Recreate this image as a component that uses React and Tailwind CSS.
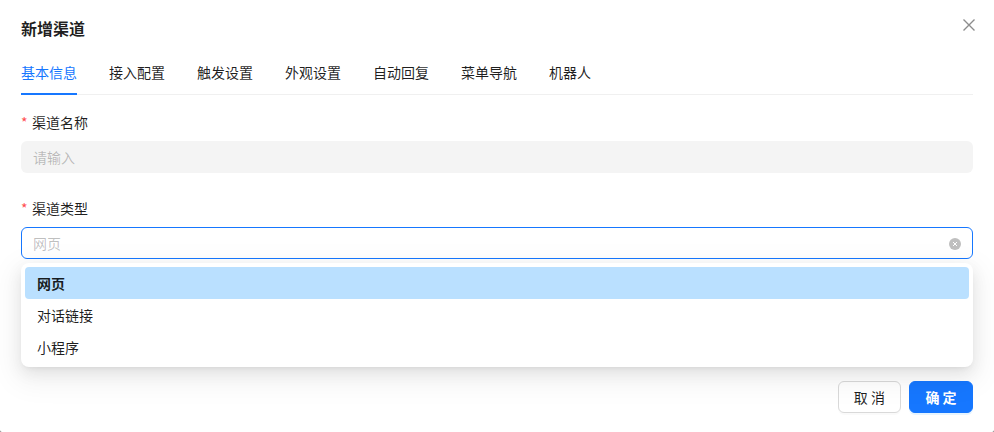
import { useState } from 'react';

const tabs = ['基本信息', '接入配置', '触发设置', '外观设置', '自动回复', '菜单导航', '机器人'];
const channelTypes = ['网页', '对话链接', '小程序'];

function FieldLabel({ htmlFor, children }) {
  return (
    <label htmlFor={htmlFor} className="flex h-[22px] items-center gap-1 self-start">
      <span className="w-[7px] text-[#ff4d4f]" aria-hidden="true">*</span>
      {children}
    </label>
  );
}

export default function App() {
  const [activeTab, setActiveTab] = useState(tabs[0]);
  const [channelType, setChannelType] = useState('网页');
  const [open, setOpen] = useState(true);

  // The custom option list replaces the native popup
  const toggleList = (e) => {
    e.preventDefault();
    e.currentTarget.focus();
    setOpen(!open);
  };

  const pick = (type) => {
    setChannelType(type);
    setOpen(false);
  };

  return (
    <div className="bg-neutral-500">
      <form
        role="dialog"
        aria-labelledby="dialog-title"
        onSubmit={(e) => e.preventDefault()}
        className="relative flex min-h-screen flex-col rounded-b-xs bg-white px-[21px] pt-4 pb-[19px] font-['Noto_Sans_CJK_SC',sans-serif] text-sm leading-[22px] text-black/88"
      >
        <header className="mb-[9px] flex items-center justify-between">
          <h1 id="dialog-title" className="text-base leading-6 font-bold">新增渠道</h1>
        </header>
        <button type="button" aria-label="关闭" className="absolute top-[14px] right-[14px] flex size-[22px] items-center justify-center text-black/45 hover:text-black/88">
          <svg viewBox="0 0 12 12" className="size-3" fill="none" stroke="currentColor" strokeWidth="1.4">
            <path d="M0.5 0.5 11.5 11.5M11.5 0.5 0.5 11.5" />
          </svg>
        </button>

        <nav role="tablist" className="mb-4 flex gap-8 border-b border-[#f0f0f0]">
          {tabs.map((tab) => (
            <button
              key={tab}
              type="button"
              role="tab"
              aria-selected={tab === activeTab}
              onClick={() => setActiveTab(tab)}
              className={tab === activeTab ? '-mb-px border-b-2 border-[#1677ff] pt-3 pb-2.5 text-[#1677ff]' : '-mb-px border-b-2 border-transparent pt-3 pb-2.5'}
            >
              {tab}
            </button>
          ))}
        </nav>

        <div className="mb-6 flex flex-col gap-2">
          <FieldLabel htmlFor="channel-name">渠道名称</FieldLabel>
          <input
            id="channel-name"
            required
            placeholder="请输入"
            className="h-8 w-full rounded-md bg-[#f4f4f4] px-3 outline-none placeholder:text-black/25"
          />
        </div>

        <div className="relative flex flex-col gap-2">
          <FieldLabel htmlFor="channel-type">渠道类型</FieldLabel>
          <div className="relative">
            <select
              id="channel-type"
              value={channelType}
              onMouseDown={toggleList}
              onChange={(e) => pick(e.target.value)}
              className="block h-8 w-full appearance-none rounded-md border border-[#1677ff] bg-white px-[11px] text-black/25 outline-none"
            >
              {channelTypes.map((type) => (
                <option key={type}>{type}</option>
              ))}
            </select>
            <button type="button" aria-label="清除" className="absolute top-[11px] right-3 text-[#bfbfbf]">
              <svg viewBox="0 0 12 12" className="block size-3">
                <circle cx="6" cy="6" r="6" fill="currentColor" />
                <path d="M4 4 8 8M8 4 4 8" stroke="#fff" strokeWidth="1" />
              </svg>
            </button>
          </div>

          {open && (
            <ul
              role="listbox"
              aria-label="渠道类型"
              className="absolute inset-x-0 top-full mt-1 rounded-lg bg-white p-1 shadow-[0_6px_16px_0_rgba(0,0,0,0.08),0_3px_6px_-4px_rgba(0,0,0,0.12),0_9px_28px_8px_rgba(0,0,0,0.05)]"
            >
              {channelTypes.map((type) => (
                <li
                  key={type}
                  role="option"
                  aria-selected={type === channelType}
                  onClick={() => pick(type)}
                  className={type === channelType ? 'cursor-pointer rounded-sm bg-[#bae0ff] px-3 py-[5px] font-bold' : 'cursor-pointer rounded-sm px-3 py-[5px] hover:bg-black/4'}
                >
                  {type}
                </li>
              ))}
            </ul>
          )}
        </div>

        <footer className="mt-auto flex justify-end gap-2 pt-10">
          <button type="button" className="h-8 rounded-md border border-[#d9d9d9] bg-white px-[15px] shadow-[0_2px_0_rgba(0,0,0,0.02)]">
            取 消
          </button>
          <button type="submit" className="h-8 min-w-16 rounded-md border border-[#1677ff] bg-[#1677ff] px-[15px] font-bold text-white shadow-[0_2px_0_rgba(5,145,255,0.1)]">
            确 定
          </button>
        </footer>
      </form>
    </div>
  );
}
